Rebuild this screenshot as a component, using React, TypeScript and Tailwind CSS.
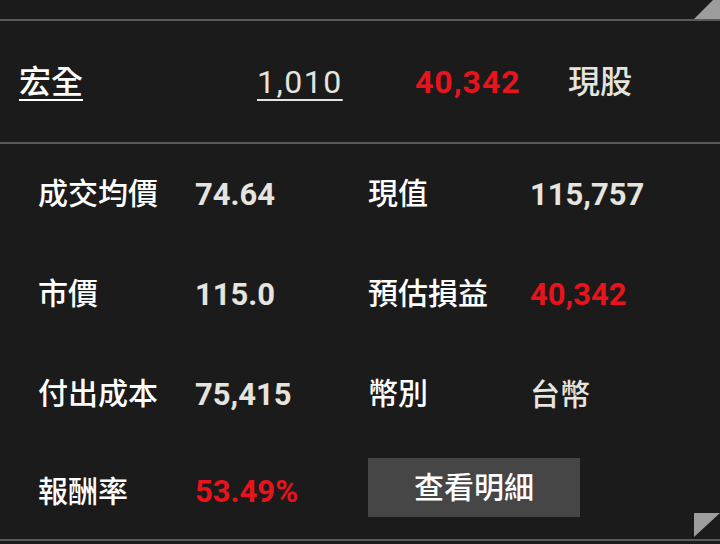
const font = { fontFamily: '"Roboto", "Noto Sans CJK TC", sans-serif' };

type Cell = { label: string; value: string; red?: boolean; text?: boolean };

const rows: [Cell, Cell | null][] = [
  [{ label: "成交均價", value: "74.64" }, { label: "現值", value: "115,757" }],
  [{ label: "市價", value: "115.0" }, { label: "預估損益", value: "40,342", red: true }],
  [{ label: "付出成本", value: "75,415" }, { label: "幣別", value: "台幣", text: true }],
  [{ label: "報酬率", value: "53.49%", red: true }, null],
];

function Value({ cell }: { cell: Cell }) {
  if (cell.text) return <span className="text-[30px] font-medium text-[#e6e4df]">{cell.value}</span>;
  return (
    <span className={cell.red ? "font-bold text-[#e8131b]" : "font-bold text-[#e6e4df]"}>
      {cell.value}
    </span>
  );
}

export default function App() {
  return (
    <div
      className="relative h-[544px] w-[720px] overflow-hidden bg-[#1b1b1b] flex flex-col"
      style={font}
    >
      <svg className="absolute right-0 top-0" width="26" height="19" viewBox="0 0 26 19">
        <polygon points="0,19 19,0 26,0 26,19" fill="#9d9d9d" />
      </svg>
      <div className="h-[19px] shrink-0" />
      <div className="h-[2px] shrink-0 bg-[#5a5a5a]" />

      <div className="flex h-[121px] shrink-0 items-center pl-[19px] text-[32px] leading-none">
        <span className="w-[238px] font-medium text-white underline decoration-2 underline-offset-[6px]">宏全</span>
        <span className="w-[158px] tracking-[1.5px] text-[#e6e4df] underline decoration-2 underline-offset-[6px]">
          1,010
        </span>
        <span className="w-[153px] font-bold tracking-[1px] text-[#e8131b]">40,342</span>
        <span className="font-medium text-[#e6e4df]">現股</span>
      </div>
      <div className="h-[2px] shrink-0 bg-[#5a5a5a]" />

      <div className="flex flex-col pl-[38px] text-[30px] leading-none">
        {rows.map(([a, b], i) => (
          <div
            key={i}
            className={
              "grid grid-cols-[157px_173px_162px_1fr] items-center " +
              (i === 3 ? "h-[95px]" : "h-[100px]")
            }
          >
            <span className="font-medium text-white">{a.label}</span>
            <span className="text-[31px]">
              <Value cell={a} />
            </span>
            {b ? (
              <>
                <span className="font-medium text-white">{b.label}</span>
                <span className="text-[31px]">
                  <Value cell={b} />
                </span>
              </>
            ) : (
              <button className="col-span-2 mb-[8px] flex h-[59px] w-[212px] items-center justify-center bg-[#464646] text-[30px] font-medium text-white">
                查看明細
              </button>
            )}
          </div>
        ))}
      </div>

      <div className="h-[2px] shrink-0 bg-[#5a5a5a]" />
      <svg className="absolute left-[694px] top-[513px]" width="26" height="24" viewBox="0 0 26 24">
        <polygon points="0,0 26,0 0,24" fill="#9d9d9d" />
      </svg>
    </div>
  );
}
